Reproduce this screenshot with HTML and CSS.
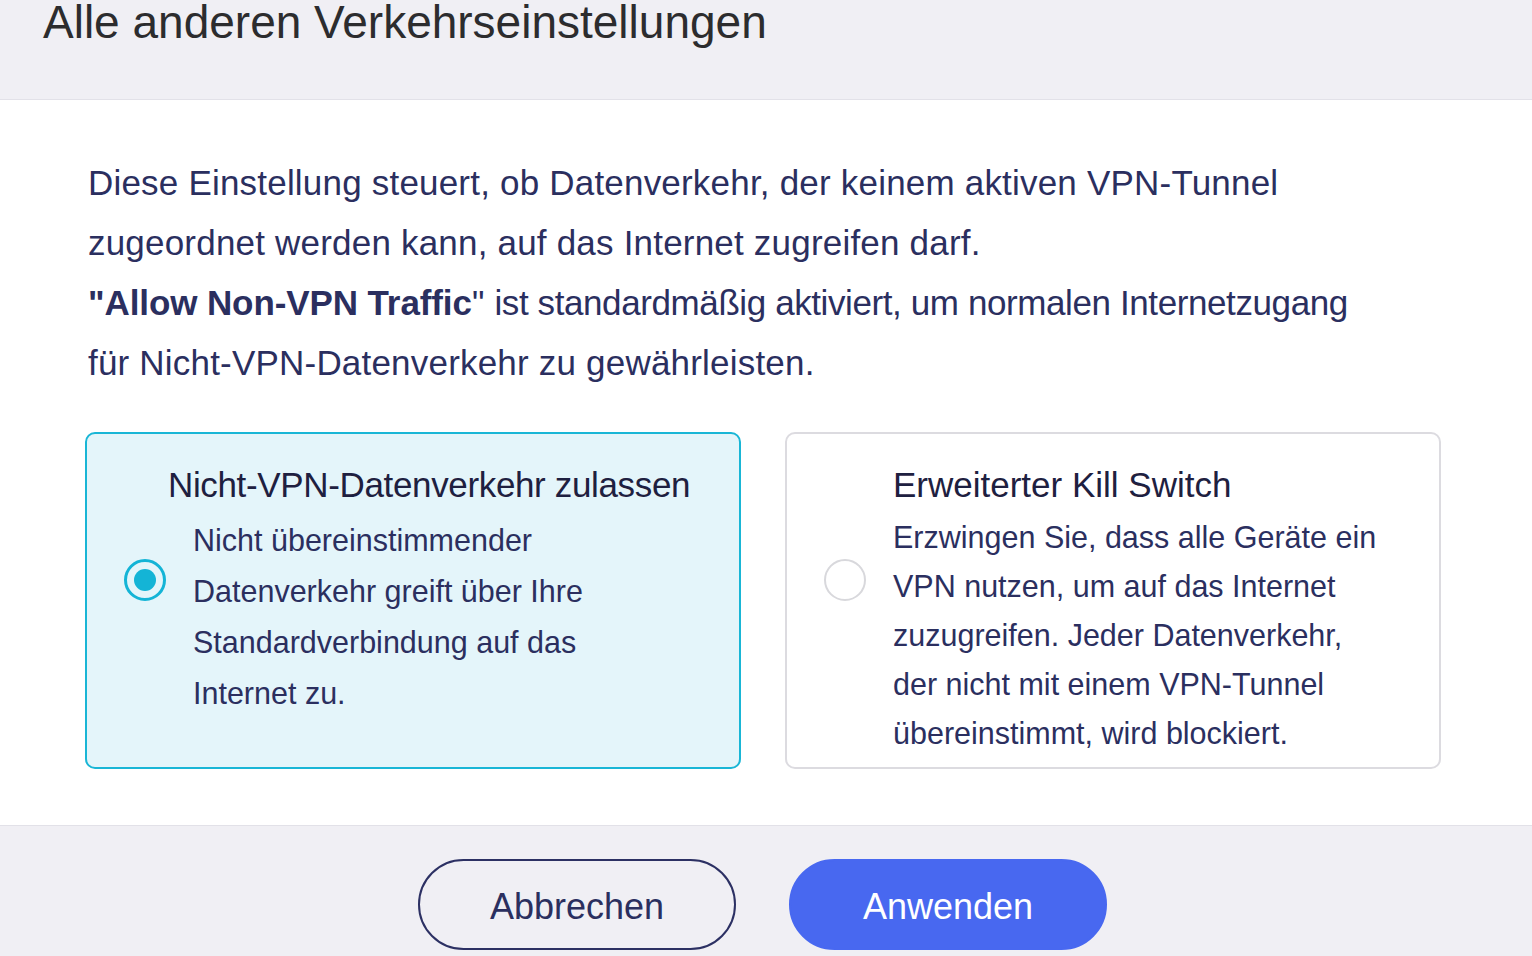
FILE: index.html
```html
<!DOCTYPE html>
<html lang="de">
<head>
<meta charset="utf-8">
<title>Alle anderen Verkehrseinstellungen</title>
<link rel="stylesheet" href="styles.css">
</head>
<body>
<div class="dialog">
  <header class="dialog-header">
    <h1 class="dialog-title">Alle anderen Verkehrseinstellungen</h1>
  </header>
  <main class="dialog-body">
    <p class="intro">Diese Einstellung steuert, ob Datenverkehr, der keinem aktiven VPN-Tunnel<br>zugeordnet werden kann, auf das Internet zugreifen darf.<br><strong>"Allow Non-VPN Traffic</strong>" <span class="intro-tight">ist standardmäßig aktiviert, um normalen Internetzugang</span><br>für Nicht-VPN-Datenverkehr zu gewährleisten.</p>
    <div class="options">
      <label class="option option-selected">
        <span class="radio radio-on"><span class="radio-dot"></span></span>
        <span class="option-text">
          <span class="option-title option-title-shift">Nicht-VPN-Datenverkehr zulassen</span>
          <span class="option-desc">Nicht übereinstimmender<br>Datenverkehr greift über Ihre<br>Standardverbindung auf das<br>Internet zu.</span>
        </span>
      </label>
      <label class="option">
        <span class="radio"></span>
        <span class="option-text">
          <span class="option-title">Erweiterter Kill Switch</span>
          <span class="option-desc option-desc-tight">Erzwingen Sie, dass alle Geräte ein<br>VPN nutzen, um auf das Internet<br>zuzugreifen. Jeder Datenverkehr,<br>der nicht mit einem VPN-Tunnel<br>übereinstimmt, wird blockiert.</span>
        </span>
      </label>
    </div>
  </main>
  <footer class="dialog-footer">
    <button class="btn btn-outline">Abbrechen</button>
    <button class="btn btn-primary">Anwenden</button>
  </footer>
</div>
</body>
</html>
```

FILE: styles.css
```css
* { box-sizing: border-box; }
html, body { margin: 0; padding: 0; }
body {
  font-family: "Liberation Sans", Arial, sans-serif;
  background: #ffffff;
  width: 1532px;
  height: 956px;
  overflow: hidden;
}
.dialog {
  display: flex;
  flex-direction: column;
  height: 956px;
}
.dialog-header {
  height: 100px;
  background: #f0eff4;
  border-bottom: 1px solid #e2e1e8;
  padding-left: 43px;
}
.dialog-title {
  margin: -1px 0 0 0;
  font-size: 46px;
  line-height: 47px;
  font-weight: 400;
  color: #2c2c2e;
  white-space: nowrap;
}
.dialog-body {
  background: #ffffff;
  padding: 53px 60px 55px 85px;
  height: 725px;
}
.intro {
  margin: 0 0 39px 3px;
  font-size: 35px;
  line-height: 60px;
  color: #2b2f5f;
  letter-spacing: 0.2px;
  white-space: nowrap;
}
.intro strong { font-weight: 700; letter-spacing: -0.1px; }
.intro-tight { letter-spacing: -0.4px; }
.options {
  display: flex;
  gap: 44px;
}
.option {
  flex: none;
  width: 656px;
  height: 337px;
  border: 2px solid #dcdbe0;
  border-radius: 10px;
  background: #ffffff;
  display: flex;
  align-items: flex-start;
  padding: 29px 20px 0 37px;
}
.option-selected {
  background: #e4f5fa;
  border-color: #19b6d6;
}
.radio {
  flex: none;
  width: 42px;
  height: 42px;
  margin-top: 96px;
  border: 2px solid #d8d8dc;
  border-radius: 50%;
  display: flex;
  align-items: center;
  justify-content: center;
}
.radio-on {
  border: 3px solid #14b4d6;
}
.radio-dot {
  width: 22px;
  height: 22px;
  border-radius: 50%;
  background: #14b4d6;
}
.option-text {
  display: flex;
  flex-direction: column;
  margin-left: 27px;
  white-space: nowrap;
}
.option-title {
  font-size: 35px;
  line-height: 44px;
  color: #1e2040;
}
.option-title-shift {
  margin-left: -25px;
  letter-spacing: -0.35px;
}
.option-desc {
  margin-top: 8px;
  font-size: 30.5px;
  line-height: 51px;
  color: #2b2f5f;
}
.option-desc-tight {
  margin-top: 6px;
  line-height: 49px;
}
.dialog-footer {
  flex: 1;
  background: #f0eff4;
  border-top: 1px solid #e2e1e8;
  display: flex;
  justify-content: center;
  align-items: flex-start;
  gap: 53px;
  padding-top: 33px;
  padding-right: 7px;
}
.btn {
  width: 318px;
  height: 91px;
  border-radius: 46px;
  font-family: "Liberation Sans", Arial, sans-serif;
  font-size: 36px;
  padding-top: 6px;
  cursor: pointer;
}
.btn-outline {
  background: transparent;
  border: 2px solid #2c3063;
  color: #2b2f5f;
}
.btn-primary {
  background: #4868f0;
  border: 2px solid #4868f0;
  color: #ffffff;
}
```
